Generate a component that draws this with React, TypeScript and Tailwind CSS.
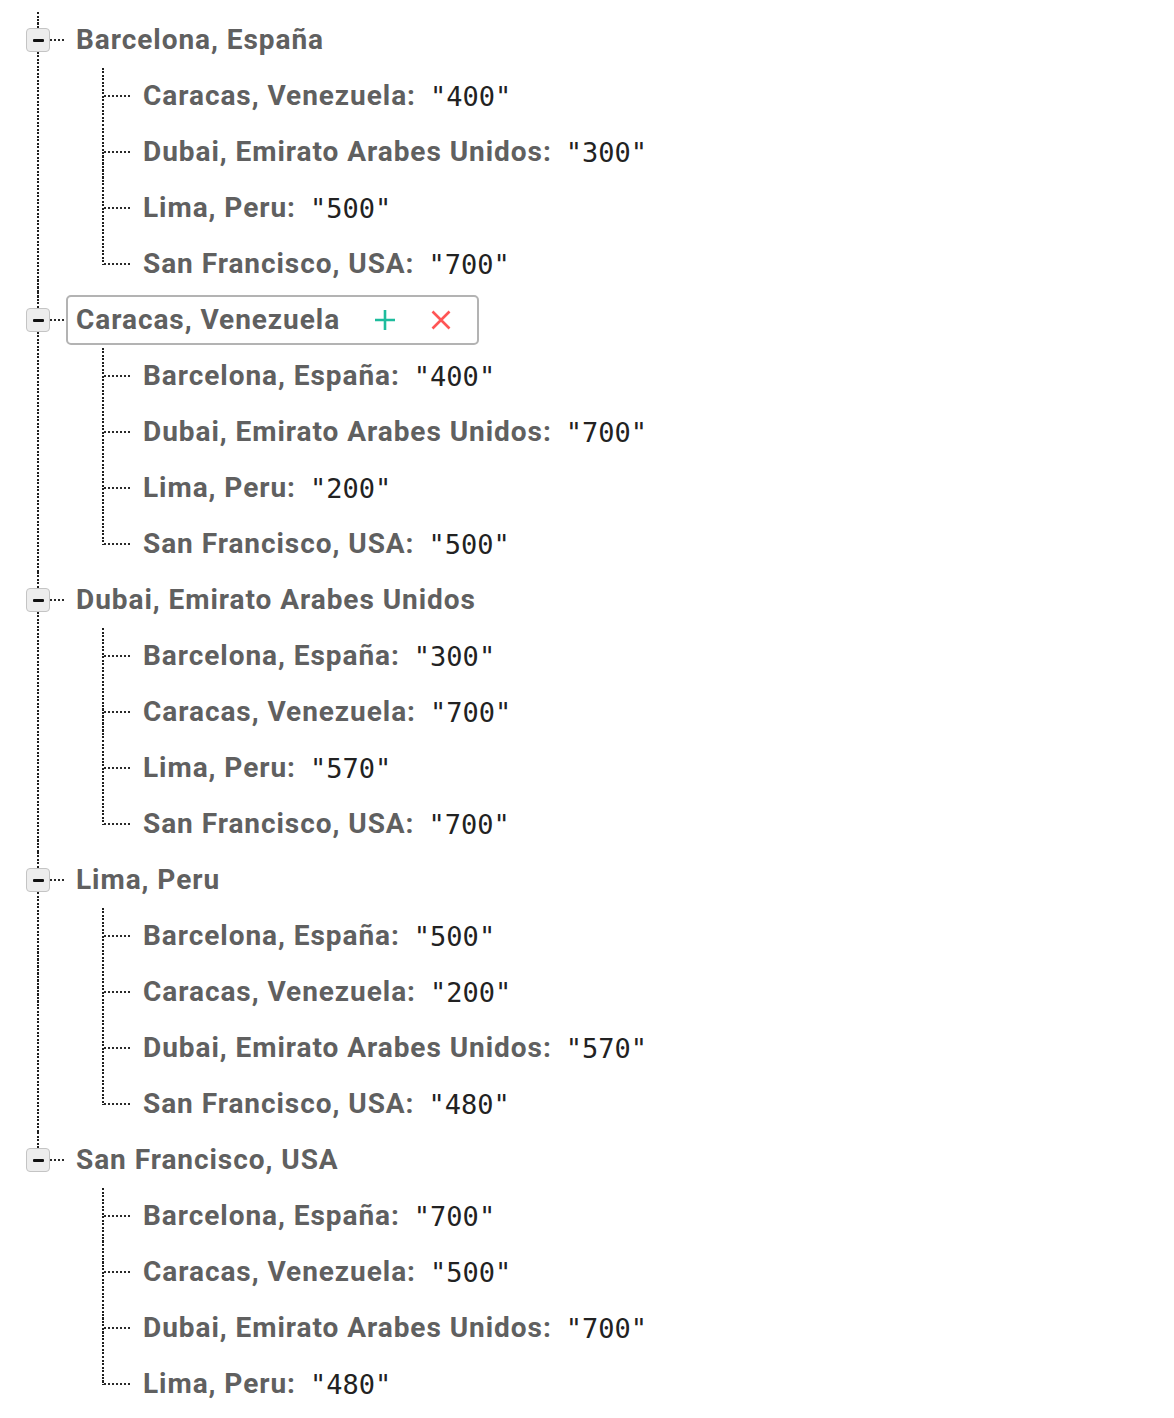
import React from "react"

type Child = { key: string; value: string }
type Node = { key: string; children: Child[]; selected?: boolean }

const data: Node[] = [
  {
    key: "Barcelona, España",
    children: [
      { key: "Caracas, Venezuela", value: "400" },
      { key: "Dubai, Emirato Arabes Unidos", value: "300" },
      { key: "Lima, Peru", value: "500" },
      { key: "San Francisco, USA", value: "700" },
    ],
  },
  {
    key: "Caracas, Venezuela",
    selected: true,
    children: [
      { key: "Barcelona, España", value: "400" },
      { key: "Dubai, Emirato Arabes Unidos", value: "700" },
      { key: "Lima, Peru", value: "200" },
      { key: "San Francisco, USA", value: "500" },
    ],
  },
  {
    key: "Dubai, Emirato Arabes Unidos",
    children: [
      { key: "Barcelona, España", value: "300" },
      { key: "Caracas, Venezuela", value: "700" },
      { key: "Lima, Peru", value: "570" },
      { key: "San Francisco, USA", value: "700" },
    ],
  },
  {
    key: "Lima, Peru",
    children: [
      { key: "Barcelona, España", value: "500" },
      { key: "Caracas, Venezuela", value: "200" },
      { key: "Dubai, Emirato Arabes Unidos", value: "570" },
      { key: "San Francisco, USA", value: "480" },
    ],
  },
  {
    key: "San Francisco, USA",
    children: [
      { key: "Barcelona, España", value: "700" },
      { key: "Caracas, Venezuela", value: "500" },
      { key: "Dubai, Emirato Arabes Unidos", value: "700" },
      { key: "Lima, Peru", value: "480" },
    ],
  },
]

const keyFont =
  "font-['Roboto',_'Liberation_Sans',_sans-serif] text-[28px] font-bold tracking-[0.95px] text-[#606060] leading-none whitespace-nowrap"

// dotted connector pieces
const vDots = "w-[2px] bg-[image:repeating-linear-gradient(to_bottom,#1f1f1f_0_2px,transparent_2px_3.5px)]"
const hDots = "h-[2px] bg-[image:repeating-linear-gradient(to_right,#2a2a2a_0_2px,transparent_2px_4px)]"

// one leaf line: key and its quoted value
const ChildRow = ({ item, last }: { item: Child; last: boolean }) => (
  <div className="flex h-[56px]">
    <div className={last ? `h-[29px] ${vDots}` : vDots} />
    <div className="flex items-center">
      <div className={`w-[28px] ${hDots}`} />
      <span className={`ml-[11px] ${keyFont}`}>{item.key}:</span>
      <span className="ml-[14px] whitespace-nowrap font-['DejaVu_Sans_Mono',_'Liberation_Mono',_monospace] text-[27px] leading-none text-[#222]">
        "{item.value}"
      </span>
    </div>
  </div>
)

const PlusIcon = () => (
  <svg width="22" height="22" viewBox="0 0 22 22" fill="none" stroke="#1ebc9d" strokeWidth="2.6">
    <path d="M11 1v20M1 11h20" />
  </svg>
)

const CloseIcon = () => (
  <svg width="20" height="20" viewBox="0 0 20 20" fill="none" stroke="#ff5555" strokeWidth="2.6">
    <path d="M1.5 1.5l17 17M18.5 1.5l-17 17" />
  </svg>
)

const ParentNode = ({ node, last }: { node: Node; last: boolean }) => (
  <div className="flex">
    {/* toggle column with the main dotted line */}
    <div className="flex w-[24px] flex-col items-center">
      <div className={`h-[16px] ${vDots}`} />
      <div className="flex h-[24px] w-[24px] items-center justify-center rounded-[4px] border border-[#c4c4c4] bg-[#ededed]">
        <div className="h-[3px] w-[11px] rounded-[1px] bg-[#111]" />
      </div>
      {!last && <div className={`flex-1 ${vDots}`} />}
    </div>

    <div className="flex flex-col">
      <div className="flex h-[56px] items-center">
        <div className={`w-[16px] ${hDots}`} />
        <div
          className={`flex h-[50px] items-center rounded-[5px] border-2 pl-[8px] ${
            node.selected ? "border-[#b3b3b3] pr-[26px]" : "border-transparent pr-[8px]"
          }`}
        >
          <span className={keyFont}>{node.key}</span>
          {node.selected && (
            <>
              <span className="ml-[34px] flex">
                <PlusIcon />
              </span>
              <span className="ml-[35px] flex">
                <CloseIcon />
              </span>
            </>
          )}
        </div>
      </div>
      <div className="ml-[52px] flex flex-col">
        {node.children.map((c, i) => (
          <ChildRow key={c.key} item={c} last={i === node.children.length - 1} />
        ))}
      </div>
    </div>
  </div>
)

export default function App() {
  return (
    <div className="min-h-screen w-full bg-white pl-[26px] pt-[12px]">
      {data.map((n, i) => (
        <ParentNode key={n.key} node={n} last={i === data.length - 1} />
      ))}
    </div>
  )
}
